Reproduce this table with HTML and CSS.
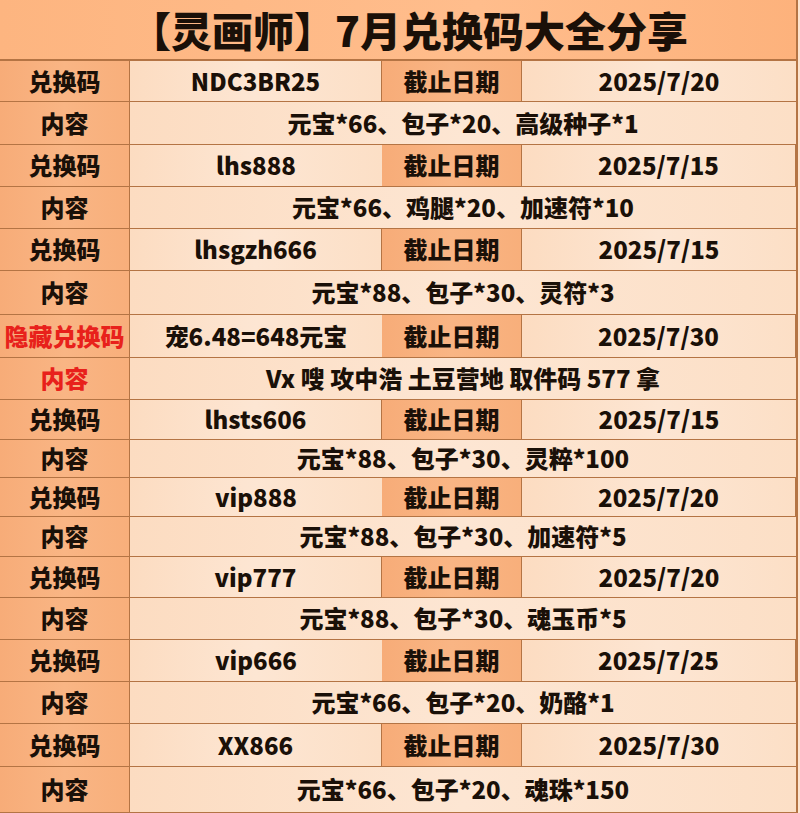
FILE: index.html
```html
<!DOCTYPE html>
<html lang="zh">
<head>
<meta charset="utf-8">
<link rel="stylesheet" href="styles.css">
</head>
<body>
<div class="sheet">
  <div class="title"><span>【灵画师】7月兑换码大全分享</span></div>
  <div class="table">
    <div class="lab">兑换码</div><div class="val">NDC3BR25</div><div class="lab">截止日期</div><div class="val">2025/7/20</div>
    <div class="lab">内容</div><div class="val wide">元宝*66、包子*20、高级种子*1</div>
    <div class="lab">兑换码</div><div class="val">lhs888</div><div class="lab">截止日期</div><div class="val">2025/7/15</div>
    <div class="lab">内容</div><div class="val wide">元宝*66、鸡腿*20、加速符*10</div>
    <div class="lab">兑换码</div><div class="val">lhsgzh666</div><div class="lab">截止日期</div><div class="val">2025/7/15</div>
    <div class="lab">内容</div><div class="val wide">元宝*88、包子*30、灵符*3</div>
    <div class="lab red">隐藏兑换码</div><div class="val">宠6.48=648元宝</div><div class="lab">截止日期</div><div class="val">2025/7/30</div>
    <div class="lab red">内容</div><div class="val wide">Vx 嗖 攻中浩 土豆营地 取件码 577 拿</div>
    <div class="lab">兑换码</div><div class="val">lhsts606</div><div class="lab">截止日期</div><div class="val">2025/7/15</div>
    <div class="lab">内容</div><div class="val wide">元宝*88、包子*30、灵粹*100</div>
    <div class="lab">兑换码</div><div class="val">vip888</div><div class="lab">截止日期</div><div class="val">2025/7/20</div>
    <div class="lab">内容</div><div class="val wide">元宝*88、包子*30、加速符*5</div>
    <div class="lab">兑换码</div><div class="val">vip777</div><div class="lab">截止日期</div><div class="val">2025/7/20</div>
    <div class="lab">内容</div><div class="val wide">元宝*88、包子*30、魂玉币*5</div>
    <div class="lab">兑换码</div><div class="val">vip666</div><div class="lab">截止日期</div><div class="val">2025/7/25</div>
    <div class="lab">内容</div><div class="val wide">元宝*66、包子*20、奶酪*1</div>
    <div class="lab">兑换码</div><div class="val">XX866</div><div class="lab">截止日期</div><div class="val">2025/7/30</div>
    <div class="lab">内容</div><div class="val wide">元宝*66、包子*20、魂珠*150</div>
  </div>
</div>
</body>
</html>
```

FILE: styles.css
```css
html, body {
  margin: 0;
  padding: 0;
  background: #fde4cf;
}
.sheet {
  width: 798px;
  height: 813px;
  overflow: hidden;
  font-family: "Noto Sans CJK SC", "Noto Sans", sans-serif;
  font-weight: 900;
  color: #1a1008;
  border-right: 2px solid #b47444;
  box-sizing: border-box;
}
.title {
  height: 61px;
  background: linear-gradient(90deg, #fdb580, #ffbd8c 60%, #fdb27c);
  box-shadow: inset 0 -2px 0 #b47444;
  display: flex;
  align-items: center;
  justify-content: center;
  padding-left: 22px;
  font-size: 41px;
  line-height: 1.2;
  white-space: nowrap;
}
.title span {
  margin-top: -2px;
}
.table {
  display: grid;
  grid-template-columns: 130px 252px 140px 1fr;
  grid-template-rows: 41px 43px 42px 42px 42px 44px 43px 42px 40px 38px 39px 40px 41px 42px 42px 42px 43px 46px;
}
.lab, .val {
  display: flex;
  align-items: center;
  justify-content: center;
  border-bottom: 1.5px solid #b47444;
  border-right: 1.5px solid #b47444;
  box-sizing: border-box;
  font-size: 24px;
  white-space: nowrap;
  padding-bottom: 2px;
}
.lab {
  background: linear-gradient(90deg, #f7ac78, #f9b584 50%, #f8af7b);
}
.val {
  background: linear-gradient(90deg, #fcdcc1, #fde6d3 50%, #fcdfc6);
}
.val:nth-child(4n) {
  border-right: none;
}
.wide {
  grid-column: span 3;
  border-right: none;
}
.red {
  color: #e8211b;
}
```
